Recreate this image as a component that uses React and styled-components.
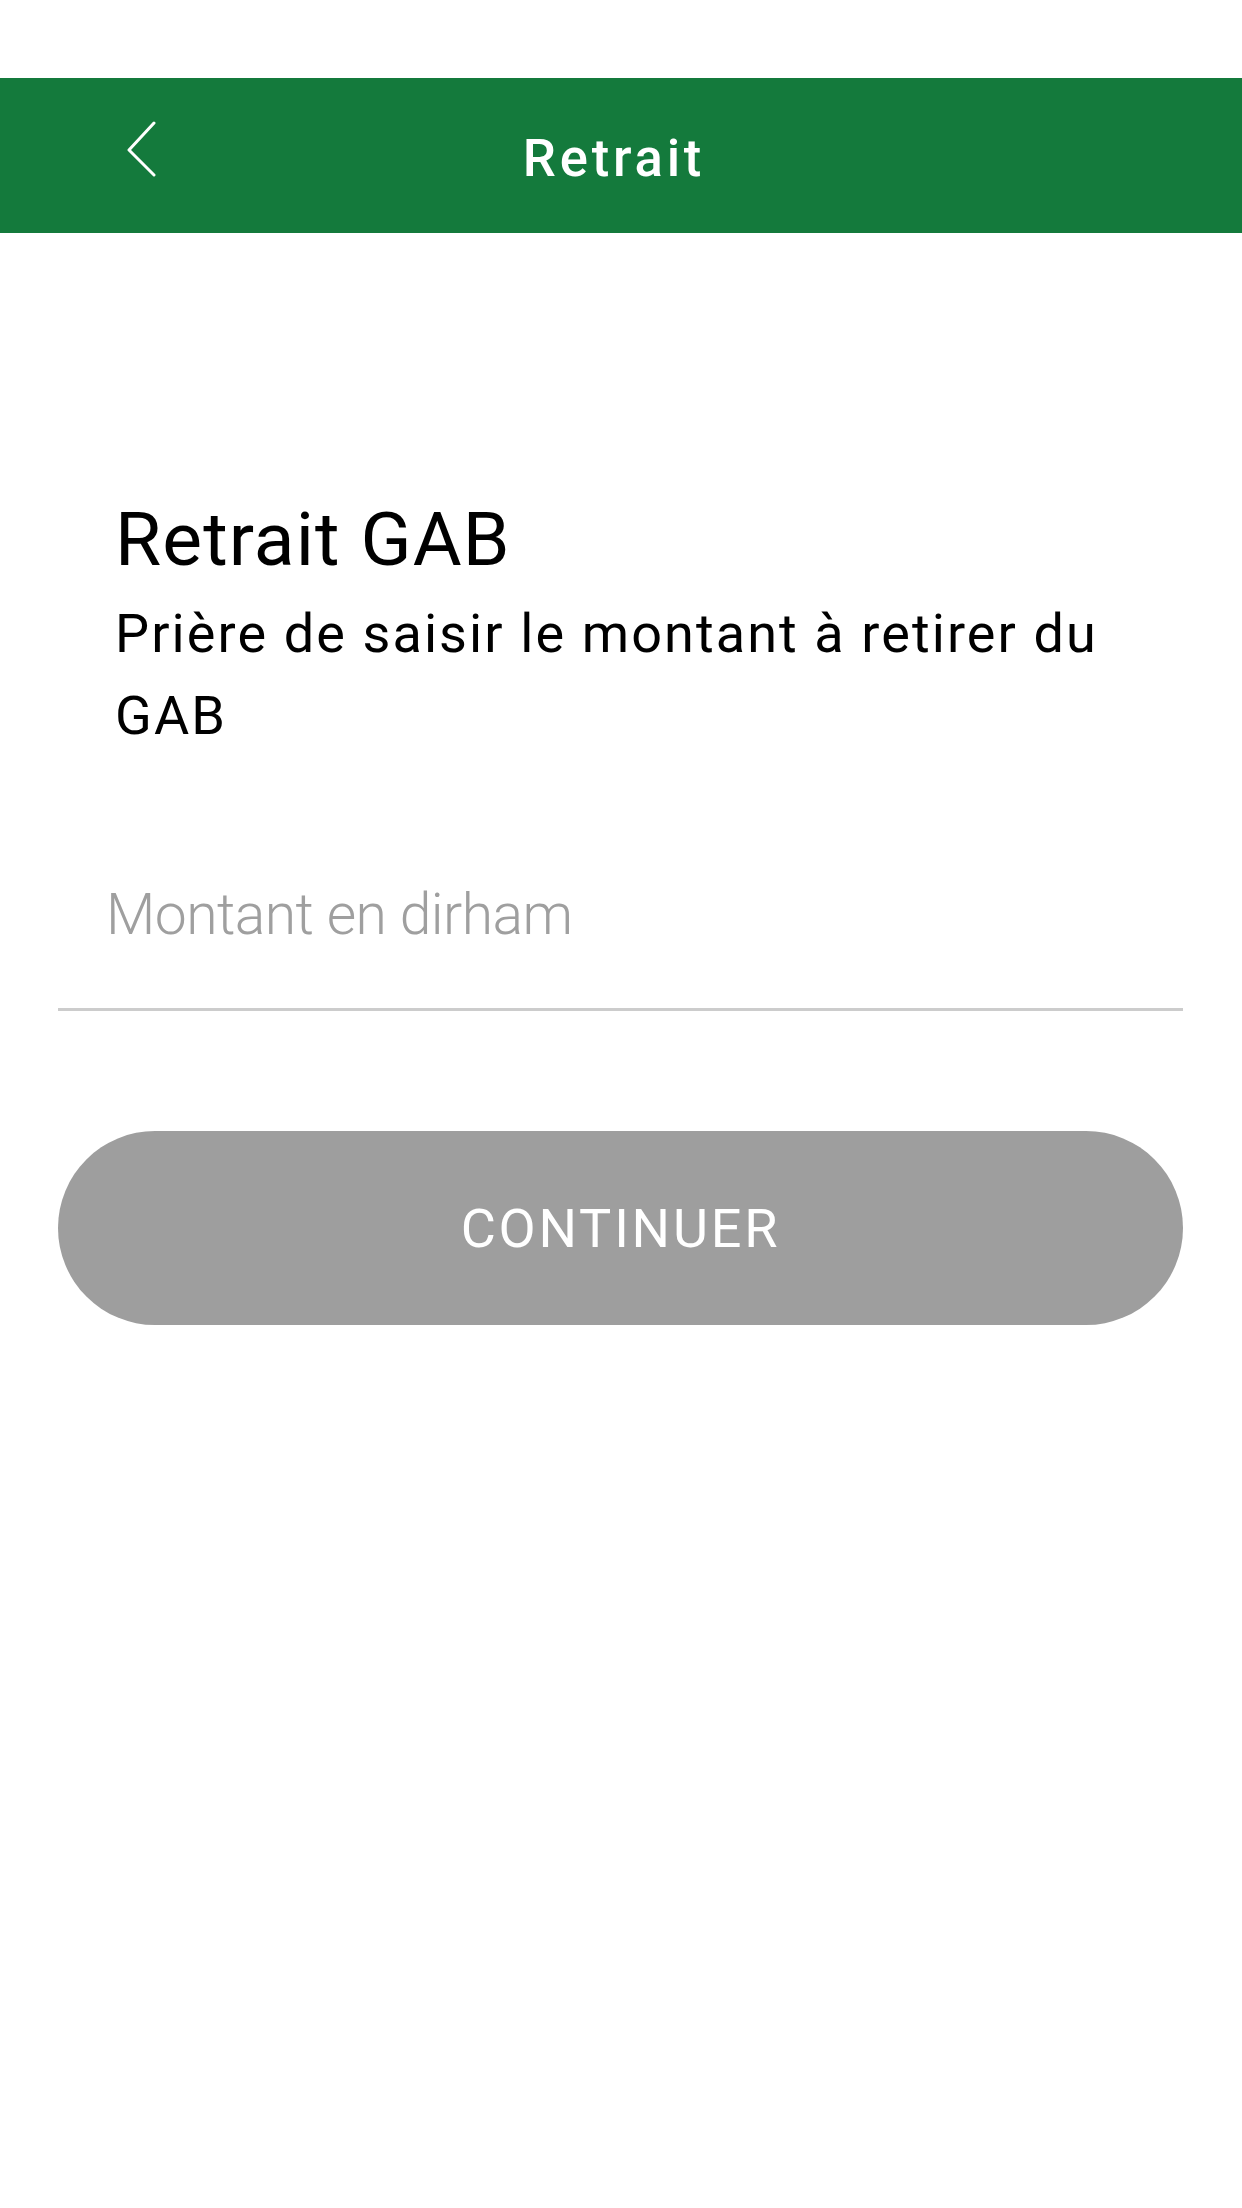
import React from "react";
import styled, { createGlobalStyle } from "styled-components";

const GlobalStyle = createGlobalStyle`
  html, body {
    margin: 0;
    padding: 0;
    background: #ffffff;
  }
  body {
    font-family: Roboto, "Liberation Sans", sans-serif;
    -webkit-font-smoothing: antialiased;
  }
  * { box-sizing: border-box; }
`;

const Screen = styled.div`
  min-height: 2208px;
  background: #ffffff;
  display: flex;
  flex-direction: column;
  padding-top: 78px;
`;

const NavBar = styled.header`
  height: 155px;
  background: #147a3c;
  display: grid;
  grid-template-columns: 1fr auto 1fr;
  align-items: start;
`;

const BackButton = styled.button`
  justify-self: start;
  margin: 43px 0 0 126px;
  padding: 0;
  border: none;
  background: transparent;
  width: 30px;
  height: 56px;
  display: flex;
  cursor: pointer;
`;

const NavTitle = styled.h1`
  margin: 54px 14px 0 0;
  font-family: Roboto, "Liberation Sans", sans-serif;
  font-weight: 500;
  font-size: 52.6px;
  line-height: 52.6px;
  letter-spacing: 3.8px;
  color: #ffffff;
`;

const Content = styled.main`
  display: flex;
  flex-direction: column;
  padding: 0 59px 0 58px;
`;

const Intro = styled.section`
  padding: 0 40px 0 57px;
  margin-top: 261px;
`;

const Heading = styled.h2`
  margin: 0;
  font-weight: 400;
  font-size: 75px;
  line-height: 90px;
  letter-spacing: 1.1px;
  color: #000000;
`;

const Description = styled.p`
  margin: 9px 0 0 0;
  font-weight: 400;
  font-size: 54px;
  line-height: 81.6px;
  letter-spacing: 2.1px;
  color: #000000;
`;

const Field = styled.label`
  display: block;
  margin-top: 125px;
  border-bottom: 3px solid #cccccc;
  padding-bottom: 59px;
`;

const AmountInput = styled.input`
  display: block;
  width: 100%;
  height: 68px;
  padding: 0 0 0 48px;
  margin: 0;
  border: none;
  outline: none;
  background: transparent;
  font-family: Roboto, "Liberation Sans", sans-serif;
  font-weight: 300;
  font-size: 57px;
  line-height: 68px;
  letter-spacing: -0.55px;
  color: #000;

  &::placeholder {
    color: #9f9f9f;
    opacity: 1;
  }
`;

const SubmitButton = styled.button`
  margin-top: 120px;
  height: 194px;
  width: 100%;
  border: none;
  border-radius: 97px;
  background: #9e9e9e;
  color: #ffffff;
  font-family: Roboto, "Liberation Sans", sans-serif;
  font-weight: 400;
  font-size: 54px;
  letter-spacing: 2.8px;
  text-transform: uppercase;
  display: flex;
  align-items: center;
  justify-content: center;
  padding: 0;
  cursor: pointer;
`;

const ChevronLeft = () => (
  <svg width="30" height="56" viewBox="0 0 30 56" fill="none">
    <path
      d="M28 2 L3 29 L28 54"
      stroke="#ffffff"
      strokeWidth="3"
      strokeLinecap="round"
      strokeLinejoin="round"
    />
  </svg>
);

export default function App() {
  return (
    <>
      <GlobalStyle />
      <Screen>
        <NavBar>
          <BackButton aria-label="Retour">
            <ChevronLeft />
          </BackButton>
          <NavTitle>Retrait</NavTitle>
          <span />
        </NavBar>
        <Content>
          <Intro>
            <Heading>Retrait GAB</Heading>
            <Description>Prière de saisir le montant à retirer du GAB</Description>
          </Intro>
          <Field>
            <AmountInput type="text" inputMode="decimal" placeholder="Montant en dirham" />
          </Field>
          <SubmitButton>Continuer</SubmitButton>
        </Content>
      </Screen>
    </>
  );
}
